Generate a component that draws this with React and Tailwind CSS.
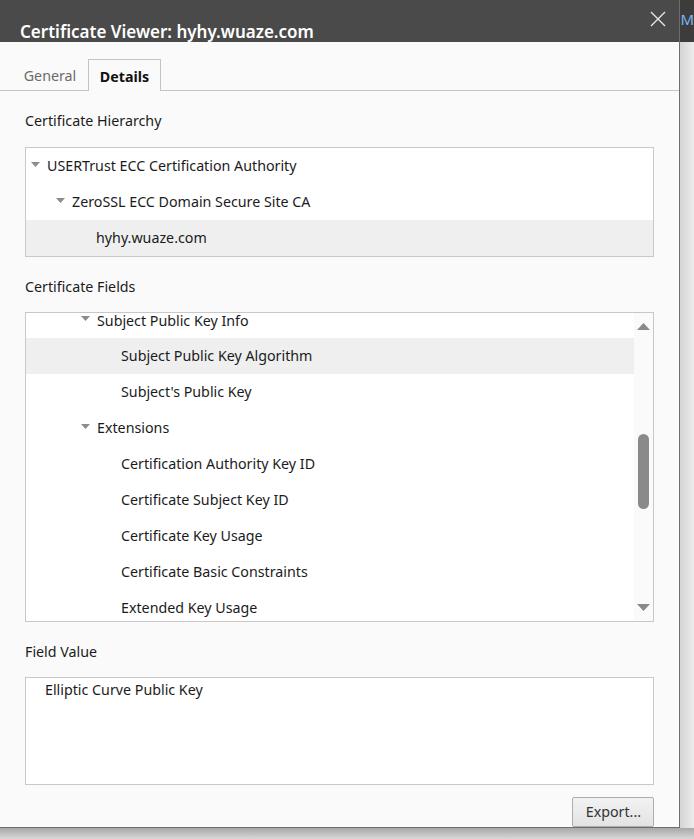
import React from 'react';

const font = { fontFamily: '"Segoe UI", "Noto Sans", "Open Sans", sans-serif' };

const Caret = () => (
  <svg width="9" height="6" viewBox="0 0 9 6" className="shrink-0">
    <path d="M0 0 H9 L4.5 5 Z" fill="#8c8c8c" />
  </svg>
);

const hierarchy = [
  { label: 'USERTrust ECC Certification Authority', level: 0, open: true },
  { label: 'ZeroSSL ECC Domain Secure Site CA', level: 1, open: true },
  { label: 'hyhy.wuaze.com', level: 2, selected: true },
];

// list is scrolled: the first row is only partly in view
const fields = [
  { label: 'Subject Public Key Info', level: 2, open: true, partial: true },
  { label: 'Subject Public Key Algorithm', level: 3, selected: true },
  { label: "Subject's Public Key", level: 3 },
  { label: 'Extensions', level: 2, open: true },
  { label: 'Certification Authority Key ID', level: 3 },
  { label: 'Certificate Subject Key ID', level: 3 },
  { label: 'Certificate Key Usage', level: 3 },
  { label: 'Certificate Basic Constraints', level: 3 },
  { label: 'Extended Key Usage', level: 3 },
];

// indent per tree level, in px from box edge
const pad = ['pl-[5px]', 'pl-[30px]', 'pl-[55px]', 'pl-[80px]'];
const padLeaf = ['pl-[20px]', 'pl-[45px]', 'pl-[70px]', 'pl-[95px]'];

const TreeRow = ({ row }) => (
  <div
    className={`${row.partial ? 'h-[25px] items-start' : 'h-9 items-center'} flex text-[14.25px] leading-[14px] text-[#1b1b1b] ${row.open ? pad[row.level] : padLeaf[row.level]} ${row.selected ? 'bg-[#efefef]' : ''}`}
  >
    <div className="flex items-center gap-[7px] h-[15px]">
      {row.open && <span className="-mt-[3px]"><Caret /></span>}
      <span>{row.label}</span>
    </div>
  </div>
);

const Label = ({ children, h }) => (
  <div className={`${h} flex items-center pt-[4px] text-[14.25px] text-[#1b1b1b]`}>{children}</div>
);

export default function App() {
  return (
    <div className="w-[694px] h-[839px] flex flex-col bg-[#cfcfcf] overflow-hidden" style={font}>
      <div className="flex h-[828px]">
        {/* dialog */}
        <div className="w-[681px] flex flex-col border-r border-b border-[#6e6e6e] bg-[#fafafa]">
          <div className="h-[42px] bg-[#4a4a4a] flex items-end justify-between pl-[20px] pr-[13px]">
            <h1 className="text-white font-semibold text-[17px] leading-none pb-[2px]">Certificate Viewer: hyhy.wuaze.com</h1>
            <svg width="16" height="16" viewBox="0 0 16 16" className="self-start mt-[11px]">
              <path d="M1 1 L15 15 M15 1 L1 15" stroke="#e6e6e6" strokeWidth="1.4" />
            </svg>
          </div>

          <div className="flex items-end h-[50px] border-b border-[#c4c4c4] pl-[12px]">
            <div className="w-[76px] h-[31px] flex items-center justify-center pt-[3px] text-[14.25px] text-[#6b6b6b]">General</div>
            <div className="w-[73px] h-[32px] -mb-px flex items-center justify-center pt-[3px] text-[14.25px] font-bold text-[#111] border border-b-0 border-[#c4c4c4] bg-[#fafafa]">Details</div>
          </div>

          <div className="px-[25px] flex flex-col">
            <Label h="h-[56px]">Certificate Hierarchy</Label>
            <div className="border border-[#c8c8c8] bg-white">
              {hierarchy.map(r => <TreeRow key={r.label} row={r} />)}
            </div>

            <Label h="h-[55px]">Certificate Fields</Label>
            <div className="h-[310px] border border-[#c8c8c8] bg-white flex overflow-hidden">
              <div className="flex-1 overflow-hidden">
                {fields.map(r => <TreeRow key={r.label} row={r} />)}
              </div>
              <div className="w-[19px] bg-[#fafafa] flex flex-col items-center justify-between py-[10px]">
                <svg width="13" height="7" viewBox="0 0 13 7"><path d="M0 7 L6.5 0 L13 7 Z" fill="#8a8a8a" /></svg>
                <div className="flex-1 w-full flex flex-col items-center">
                  <div className="mt-[104px] w-[11px] h-[75px] rounded-full bg-[#8a8a8a]" />
                </div>
                <svg width="13" height="7" viewBox="0 0 13 7"><path d="M0 0 H13 L6.5 7 Z" fill="#8a8a8a" /></svg>
              </div>
            </div>

            <Label h="h-[55px]">Field Value</Label>
            <div className="h-[108px] border border-[#c8c8c8] bg-white pl-[19px] pt-[1px] text-[14.25px] text-[#1b1b1b]">
              Elliptic Curve Public Key
            </div>

            <div className="flex justify-end mt-[12px]">
              <button className="w-[82px] h-[30px] rounded-[2px] border border-[#adadad] bg-gradient-to-b from-[#f2f2f2] to-[#e3e3e3] text-[14.25px] text-[#333]">
                Export...
              </button>
            </div>
          </div>
        </div>

        {/* what shows behind the dialog on the right */}
        <div className="flex-1 flex flex-col">
          <div className="h-[42px] bg-[#3c3c3c] pt-[12px] text-[15px] text-[#7ab4f5] leading-none overflow-hidden">M</div>
          <div className="flex-1 bg-gradient-to-r from-[#d4d4d4] to-[#ececec]" />
        </div>
      </div>
      <div className="flex-1 bg-gradient-to-b from-[#a8a8a8] to-[#d8d8d8]" />
    </div>
  );
}
